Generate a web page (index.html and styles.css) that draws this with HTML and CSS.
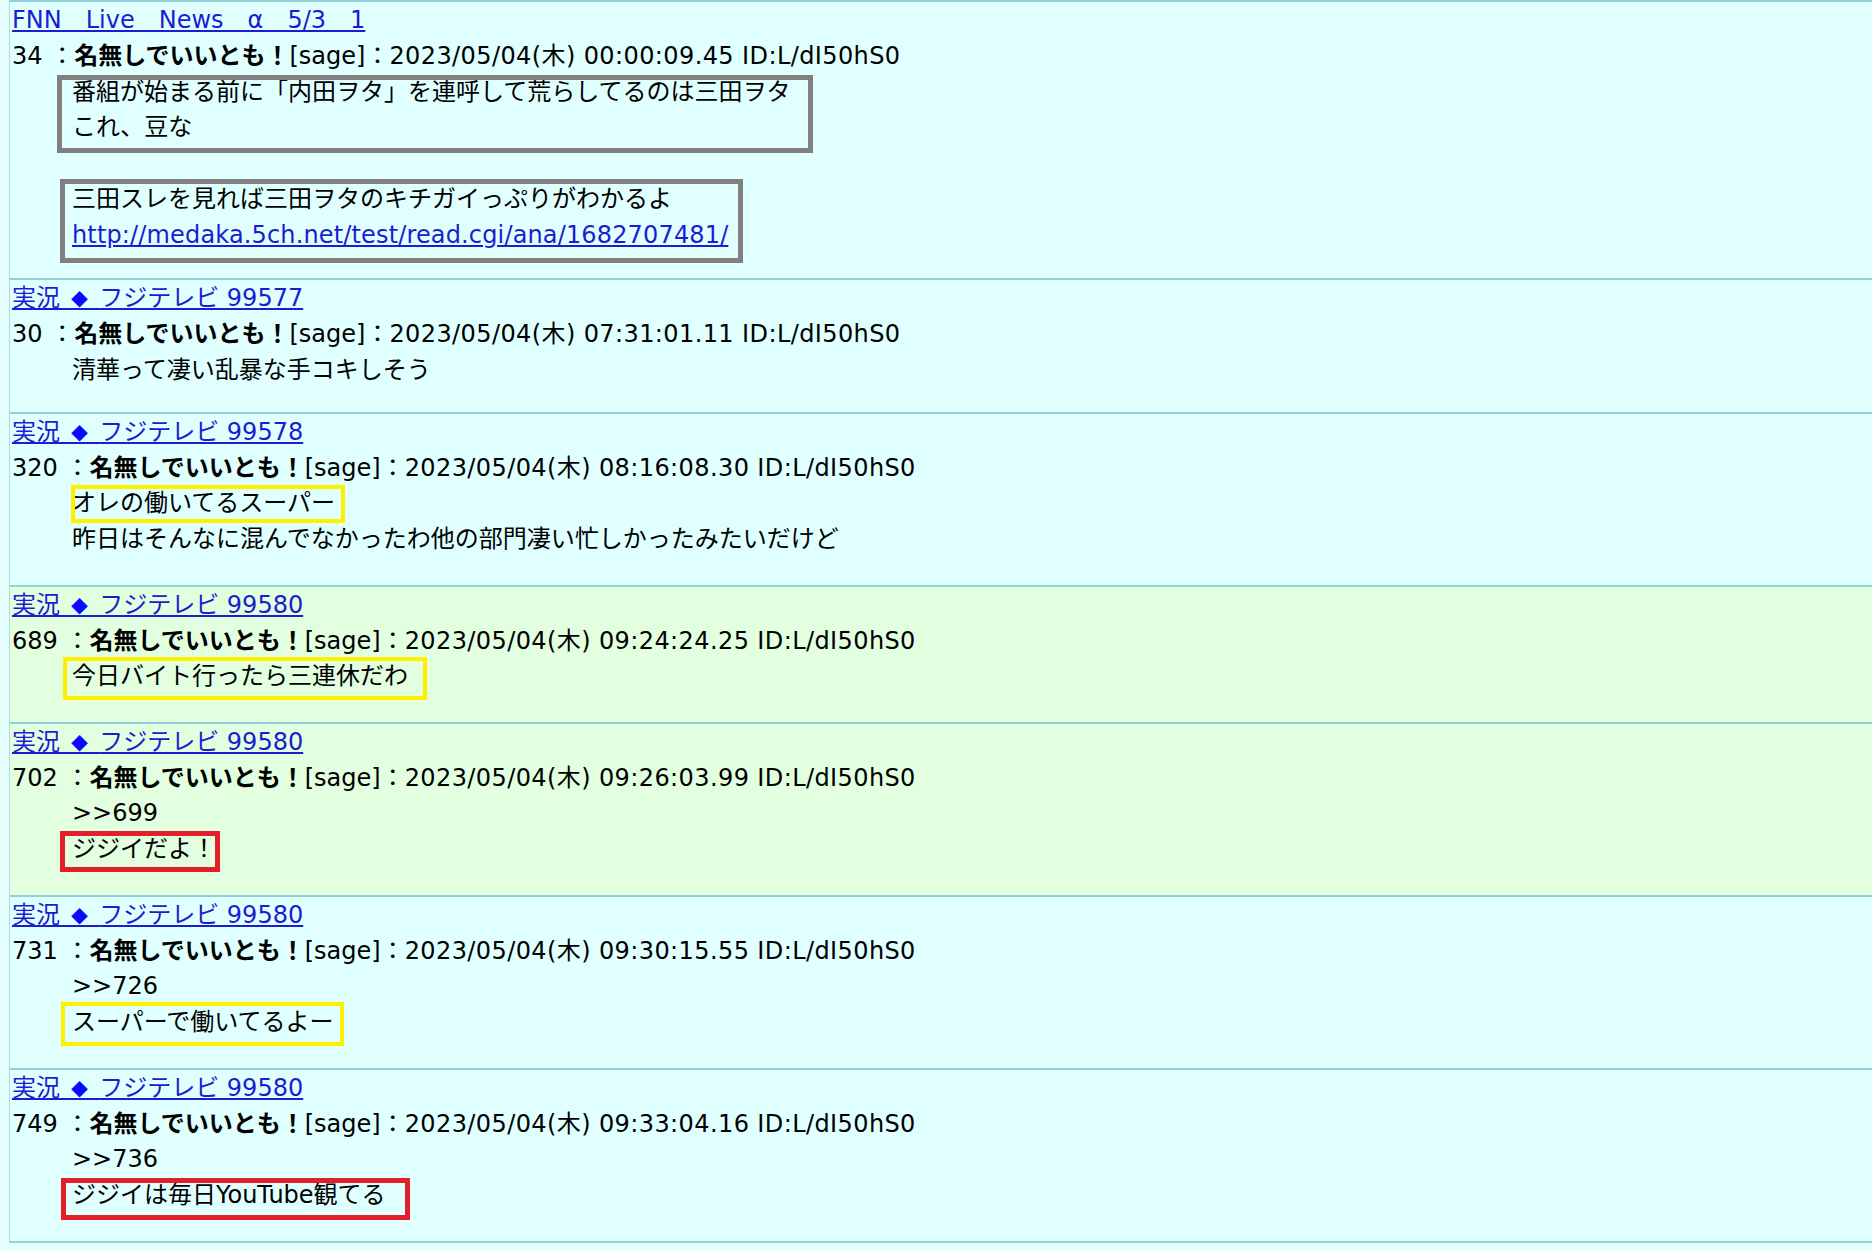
FILE: index.html
```html
<!DOCTYPE html>
<html lang="ja">
<head>
<meta charset="UTF-8">
<title>実況ログ</title>
<link rel="stylesheet" href="styles.css">
</head>
<body>
<div class="thread">
  <div class="res">
    <div class="res-title"><a href="#">FNN　Live　News　α　5/3　1</a></div>
    <dl>
      <dt>34 ：<b>名無しでいいとも！</b>[sage]：<span class="stamp">2023/05/04(木) 00:00:09.45 ID:L/dI50hS0</span></dt>
      <dd>
        <div class="note gray n1">番組が始まる前に「内田ヲタ」を連呼して荒らしてるのは三田ヲタ<br>これ、豆な</div>
        <div class="note gray n2 gap">三田スレを見れば三田ヲタのキチガイっぷりがわかるよ<br><a class="url" href="#">http://medaka.5ch.net/test/read.cgi/ana/1682707481/</a></div>
      </dd>
    </dl>
  </div>
  <div class="res plain">
    <div class="res-title"><a href="#">実況<span class="dia"> ◆ </span>フジテレビ 99577</a></div>
    <dl>
      <dt>30 ：<b>名無しでいいとも！</b>[sage]：<span class="stamp">2023/05/04(木) 07:31:01.11 ID:L/dI50hS0</span></dt>
      <dd>清華って凄い乱暴な手コキしそう</dd>
    </dl>
  </div>
  <div class="res">
    <div class="res-title"><a href="#">実況<span class="dia"> ◆ </span>フジテレビ 99578</a></div>
    <dl>
      <dt>320 ：<b>名無しでいいとも！</b>[sage]：<span class="stamp">2023/05/04(木) 08:16:08.30 ID:L/dI50hS0</span></dt>
      <dd>
        <div class="note yellow n3">オレの働いてるスーパー</div>
        昨日はそんなに混んでなかったわ他の部門凄い忙しかったみたいだけど
      </dd>
    </dl>
  </div>
  <div class="res green">
    <div class="res-title"><a href="#">実況<span class="dia"> ◆ </span>フジテレビ 99580</a></div>
    <dl>
      <dt>689 ：<b>名無しでいいとも！</b>[sage]：<span class="stamp">2023/05/04(木) 09:24:24.25 ID:L/dI50hS0</span></dt>
      <dd><div class="note yellow n4">今日バイト行ったら三連休だわ</div></dd>
    </dl>
  </div>
  <div class="res green">
    <div class="res-title"><a href="#">実況<span class="dia"> ◆ </span>フジテレビ 99580</a></div>
    <dl>
      <dt>702 ：<b>名無しでいいとも！</b>[sage]：<span class="stamp">2023/05/04(木) 09:26:03.99 ID:L/dI50hS0</span></dt>
      <dd>
        &gt;&gt;699
        <div class="note red n5">ジジイだよ！</div>
      </dd>
    </dl>
  </div>
  <div class="res">
    <div class="res-title"><a href="#">実況<span class="dia"> ◆ </span>フジテレビ 99580</a></div>
    <dl>
      <dt>731 ：<b>名無しでいいとも！</b>[sage]：<span class="stamp">2023/05/04(木) 09:30:15.55 ID:L/dI50hS0</span></dt>
      <dd>
        &gt;&gt;726
        <div class="note yellow n6">スーパーで働いてるよー</div>
      </dd>
    </dl>
  </div>
  <div class="res">
    <div class="res-title"><a href="#">実況<span class="dia"> ◆ </span>フジテレビ 99580</a></div>
    <dl>
      <dt>749 ：<b>名無しでいいとも！</b>[sage]：<span class="stamp">2023/05/04(木) 09:33:04.16 ID:L/dI50hS0</span></dt>
      <dd>
        &gt;&gt;736
        <div class="note red n7">ジジイは毎日YouTube観てる</div>
      </dd>
    </dl>
  </div>
</div>
</body>
</html>
```

FILE: styles.css
```css
body { margin: 0; background: #e6fdfd; color: #000; font-family: "DejaVu Sans", "Noto Sans CJK JP", sans-serif; font-size: 24px; line-height: 35.8px; }
a { color: #1c1cd0; }
.thread { margin-left: 9px; border-left: 1px solid #a6dde1; }
.res { background: #e0ffff; border-top: 2px solid #8ed1d7; padding: 1.2px 0 26.6px 2px; }
.res:first-child { padding-top: 1px; padding-bottom: 24.6px; }
.res:last-child { border-bottom: 2px solid #8ed1d7; }
.res.green { background: #e2ffe0; }
.res.plain { padding-bottom: 22.8px; }
.dia { font-family: "Noto Sans CJK JP", sans-serif; font-size: 17px; line-height: 1; word-spacing: 7.3px; color: #0a0aff; }
.stamp { letter-spacing: 0.4px; }
.url { letter-spacing: 0.15px; }
dl { margin: 0; }
dd { margin: 0 0 0 60px; }

/* annotation frames drawn over the text */
.note { position: relative; width: fit-content; }
.note::after { content: ""; position: absolute; border: 5px solid #808080; }
.gap { margin-top: 35.8px; }
.yellow::after { border-color: #fff000; border-width: 4px; }
.red::after { border-color: #e3202a; }
.n1::after { top: 0; right: -22px; bottom: -7px; left: -15px; }
.n2::after { top: -3px; right: -15px; bottom: -9px; left: -12px; }
.n3::after { top: -1px; right: -10px; bottom: -1px; left: -1px; }
.n4::after { top: -2px; right: -19px; bottom: -5px; left: -9px; }
.n5::after { top: -1px; right: -4px; bottom: -4px; left: -12px; }
.n6::after { top: -3px; right: -10px; bottom: -5px; left: -11px; }
.n7::after { top: 0; right: -24px; bottom: -6px; left: -11px; }
```
